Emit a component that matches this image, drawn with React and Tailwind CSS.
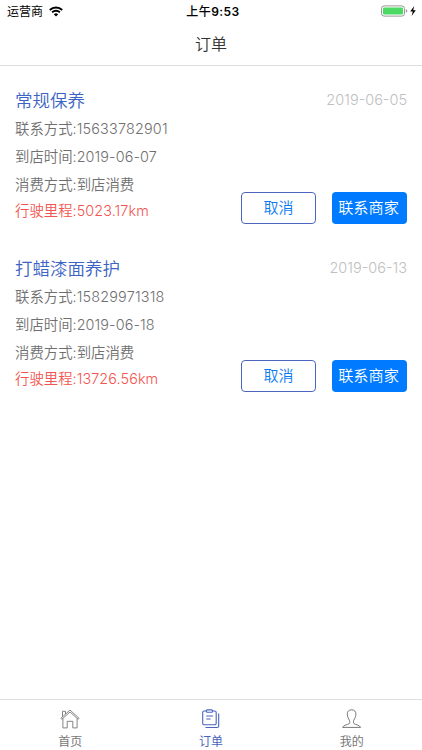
const orders = [
  {
    title: '常规保养',
    date: '2019-06-05',
    phone: '15633782901',
    arrival: '2019-06-07',
    type: '到店消费',
    mileage: '5023.17km'
  },
  {
    title: '打蜡漆面养护',
    date: '2019-06-13',
    phone: '15829971318',
    arrival: '2019-06-18',
    type: '到店消费',
    mileage: '13726.56km'
  }
]

const StatusBar = () => (
  <div className="grid grid-cols-3 items-center h-[22px] pl-[7px] pr-[5px] text-xs text-black">
    <div className="flex items-center gap-[6px]">
      <span className="pt-px">运营商</span>
      <svg className="w-[14px] h-[11px]" viewBox="0 0 14 11" fill="none" stroke="currentColor" strokeWidth="1.9">
        <path d="M0.8 4A8.9 8.9 0 0 1 13.2 4" />
        <path d="M3.1 6.4A5.6 5.6 0 0 1 10.9 6.4" />
        <path d="M7 10.6L4.9 8.4A3 3 0 0 1 9.1 8.4Z" fill="currentColor" stroke="none" />
      </svg>
    </div>
    <span className="pt-px pl-[2px] text-center font-medium tracking-[0.45px]">上午<span className="font-semibold">9:53</span></span>
    <svg className="justify-self-end w-[36px] h-[12px]" viewBox="0 0 36 12">
      <rect x="0.5" y="0.9" width="23" height="10.2" rx="2.6" fill="none" stroke="#999" />
      <rect x="2" y="2.4" width="20" height="7.2" rx="1.3" fill="#4cd964" />
      <path d="M24.8 4.2Q26.4 5 26.4 6T24.8 7.8Z" fill="#999" />
      <path d="M33.2 1L29.2 6.6H31.8L30.6 11L34.8 5.2H32.2Z" fill="#000" />
    </svg>
  </div>
)

const OrderItem = ({ order }) => (
  <div className="flex justify-between h-[168px] pl-[15px] pr-[15px] pt-[23px] font-[350]">
    <div className="text-[14.4px] text-[#707070]">
      <h2 className="h-[24px] leading-[24px] text-[17.5px] text-[#3c64c4]">{order.title}</h2>
      <p className="h-[29px] leading-[31px]">联系方式:<span className="tracking-[0.2px]">{order.phone}</span></p>
      <p className="h-[28px] leading-[29px]">到店时间:<span className="tracking-[0.1px]">{order.arrival}</span></p>
      <p className="h-[27px] leading-[29px]">消费方式:{order.type}</p>
      <p className="h-[27px] leading-[27px] text-[#f25550]">行驶里程:<span className="tracking-[0.1px]">{order.mileage}</span></p>
    </div>
    <div className="flex flex-col items-end">
      <span className="leading-[22px] text-[14.5px] font-light text-[#c0c0c0]">{order.date}</span>
      <div className="flex gap-4 mt-[81px]">
        <button className="w-[75px] h-[32px] rounded-[4px] border border-[#4a66c0] text-[15px] text-[#0a7af0]">取消</button>
        <button className="w-[75px] h-[32px] pr-[2px] rounded-[4px] bg-[#007aff] text-[15.2px] text-white whitespace-nowrap">联系商家</button>
      </div>
    </div>
  </div>
)

const HomeIcon = () => (
  <svg className="w-5 h-5" viewBox="0 0 20 20" fill="none" stroke="currentColor" strokeWidth="0.9" strokeLinejoin="round">
    <path d="M10 1L0.9 9.3L1.8 10.3L10 3L18.2 10.3L19.1 9.3Z" />
    <path d="M2.9 9.5V18.9H7.2V12.3H12.8V18.9H17.1V9.5" />
    <path d="M2.5 7.6V2.3H5.5V4.9" />
  </svg>
)

const OrderIcon = () => (
  <svg className="w-5 h-5" viewBox="0 0 20 20" fill="none" stroke="currentColor" strokeWidth="1.1" strokeLinejoin="round" strokeLinecap="round">
    <path d="M5.3 2H3.2A1.5 1.5 0 0 0 1.7 3.5V14.3A1.5 1.5 0 0 0 3.2 15.8H13.7A1.5 1.5 0 0 0 15.2 14.3V3.5A1.5 1.5 0 0 0 13.7 2H11.6" />
    <rect x="5.3" y="0.9" width="6.3" height="2.4" rx="1" />
    <path d="M5.7 7H11.6M5.7 10H9.2" />
    <path d="M17.7 4.8V16.9A1.6 1.6 0 0 1 16.1 18.5H4.9" />
  </svg>
)

const MineIcon = () => (
  <svg className="w-5 h-5" viewBox="0 0 20 20" fill="none" stroke="currentColor" strokeWidth="1" strokeLinejoin="round">
    <path d="M9.6 0.8C6.7 0.8 5.2 2.7 5.3 5.3C5.4 8.2 6.7 9.7 7.4 11.2C7.9 12.5 7.9 14 7.2 14.7C5.9 15.7 1.6 15.8 0.6 18.4H18.6C17.6 15.8 13.3 15.7 12 14.7C11.3 14 11.3 12.5 11.8 11.2C12.5 9.7 13.8 8.2 13.9 5.3C14 2.7 12.5 0.8 9.6 0.8Z" />
  </svg>
)

const tabs = [
  { label: '首页', Icon: HomeIcon },
  { label: '订单', Icon: OrderIcon, active: true },
  { label: '我的', Icon: MineIcon }
]

const App = () => {
  return (
    <div className="flex flex-col h-screen bg-white font-['Inter','Noto_Sans_CJK_SC',sans-serif]">
      <StatusBar />

      {/* NAV BAR */}
      <header className="h-[44px] border-b border-[#dedede] text-center leading-[44px] text-base font-[350] text-[#333]">
        订单
      </header>

      {/* ORDERS */}
      <main className="flex-1">
        {orders.map((order) => (
          <OrderItem key={order.date} order={order} />
        ))}
      </main>

      {/* TAB BAR */}
      <nav className="grid grid-cols-3 h-[51px] border-t border-[#dedede]">
        {tabs.map(({ label, Icon, active }) => (
          <div
            key={label}
            className={`flex flex-col items-center pt-[9px] ${active ? 'text-[#4a65bd]' : 'text-[#777]'}`}>
            <Icon />
            <span className="mt-[5px] text-xs leading-4">{label}</span>
          </div>
        ))}
      </nav>
    </div>
  )
}

export default App
